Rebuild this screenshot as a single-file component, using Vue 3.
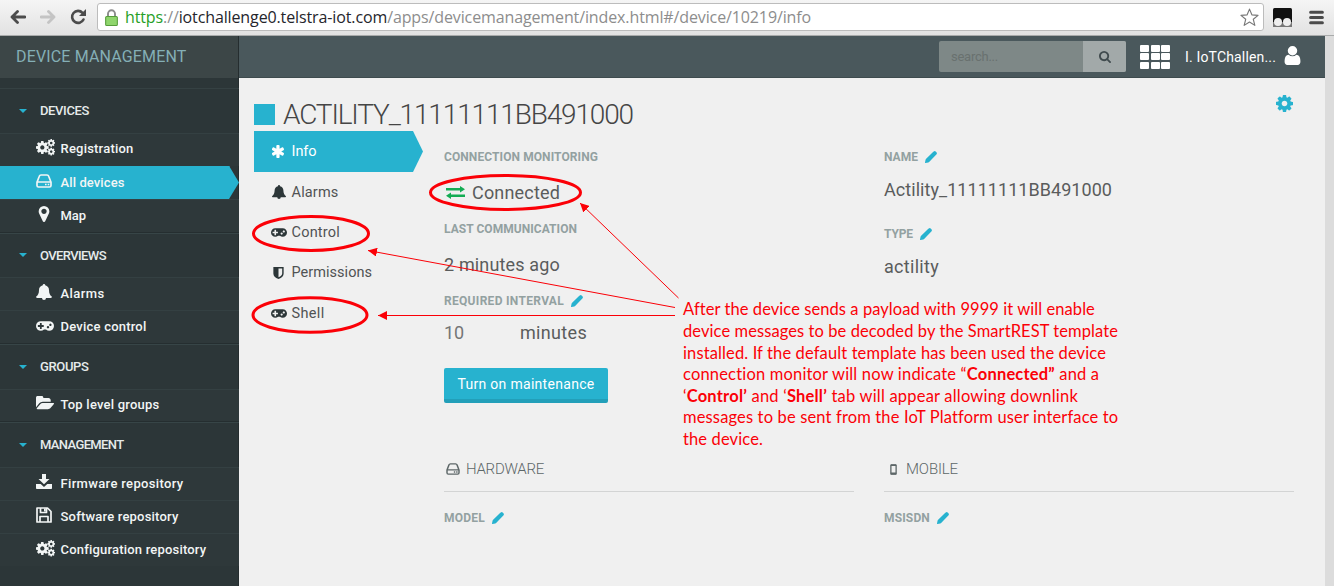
<script setup>
import { h } from 'vue'

// Tracks a line of text so that it fills the given width.
const vFit = {
  mounted(el, { value }) {
    const natural = el.getBoundingClientRect().width
    el.style.letterSpacing = ((value - natural) / el.textContent.length).toFixed(3) + 'px'
  }
}

const COG = 'M1152 896q0-106-75-181t-181-75-181 75-75 181 75 181 181 75 181-75 75-181zm512-109v222q0 12-8 23t-20 13l-185 28q-19 54-39 91 35 50 107 138 10 12 10 25t-9 23q-27 37-99 108t-94 71q-12 0-26-9l-138-108q-44 23-91 38-16 136-29 186-7 28-36 28h-222q-14 0-24.5-8.5t-11.5-21.5l-28-184q-49-16-90-37l-141 107q-10 9-25 9-14 0-25-11-126-114-165-168-7-10-7-23 0-12 8-23 15-21 51-66.5t54-70.5q-27-50-41-99l-183-27q-13-2-21-12.5t-8-23.5v-222q0-12 8-23t19-13l186-28q14-46 39-92-40-57-107-138-10-12-10-24 0-10 9-23 26-36 98.5-107.5t94.5-71.5q13 0 26 10l138 107q44-23 91-38 16-136 29-186 7-28 36-28h222q14 0 24.5 8.5t11.5 21.5l28 184q49 16 90 37l142-107q9-9 24-9 13 0 25 10 129 119 165 170 7 8 7 22 0 12-8 23-15 21-51 66.5t-54 70.5q26 50 41 98l183 28q13 2 21 12.5t8 23.5z'

// name: [viewBox, [[path, transform, stroke width], ...]]
const icons = {
  cog: ['128 128 1536 1536', [[COG]]],
  cogs: ['0 0 18 16', [[COG, 'translate(-1.1 .9) scale(.0079)'], [COG, 'translate(10.1 -.6) scale(.0048)'], [COG, 'translate(10.1 7.6) scale(.0048)']]],
  asterisk: ['128 128 1536 1536', [['M1482 1050q46 26 59.5 77.5t-12.5 97.5l-64 110q-26 46-77.5 59.5t-97.5-12.5l-266-153v307q0 52-38 90t-90 38h-128q-52 0-90-38t-38-90v-307l-266 153q-46 26-97.5 12.5t-77.5-59.5l-64-110q-26-46-12.5-97.5t59.5-77.5l266-154-266-154q-46-26-59.5-77.5t12.5-97.5l64-110q26-46 77.5-59.5t97.5 12.5l266 153v-307q0-52 38-90t90-38h128q52 0 90 38t38 90v307l266-153q46-26 97.5-12.5t77.5 59.5l64 110q26 46 12.5 97.5t-59.5 77.5l-266 154z']]],
  user: ['256 128 1280 1536', [['M1536 1399q0 109-62.5 187t-150.5 78h-854q-88 0-150.5-78t-62.5-187q0-85 8.5-160.5t31.5-152 58.5-131 94-89 134.5-34.5q131 128 313 128t313-128q76 0 134.5 34.5t94 89 58.5 131 31.5 152 8.5 160.5zm-256-887q0 159-112.5 271.5t-271.5 112.5-271.5-112.5-112.5-271.5 112.5-271.5 271.5-112.5 271.5 112.5 112.5 271.5z']]],
  marker: ['128 128 1536 1536', [['M1152 640q0-106-75-181t-181-75-181 75-75 181 75 181 181 75 181-75 75-181zm256 0q0 109-33 179l-364 774q-16 33-47.5 52t-67.5 19-67.5-19-46.5-52l-365-774q-33-70-33-179 0-212 150-362t362-150 362 150 150 362z']]],
  search: ['64 128 1664 1664', [['M1216 832q0-185-131.5-316.5t-316.5-131.5-316.5 131.5-131.5 316.5 131.5 316.5 316.5 131.5 316.5-131.5 131.5-316.5zm512 832q0 52-38 90t-90 38q-54 0-90-38l-343-342q-179 124-399 124-143 0-273.5-55.5t-225-150-150-225-55.5-273.5 55.5-273.5 150-225 225-150 273.5-55.5 273.5 55.5 225 150 150 225 55.5 273.5q0 220-124 399l343 343q37 37 37 90z']]],
  folder: ['0 256 1880 1280', [['M1879 952q0 31-31 66l-336 396q-43 51-120.5 86.5t-143.5 35.5h-1088q-34 0-60.5-13t-26.5-43q0-31 31-66l336-396q43-51 120.5-86.5t143.5-35.5h1088q34 0 60.5 13t26.5 43zm-343-344v160h-832q-94 0-197 47.5t-164 119.5l-337 396-5 6q0-4-.5-12.5t-.5-12.5v-960q0-92 66-158t158-66h320q92 0 158 66t66 158v32h544q92 0 158 66t66 158z']]],
  gamepad: ['0 512 1920 1024', [['M832 1088v-128q0-14-9-23t-23-9h-192v-192q0-14-9-23t-23-9h-128q-14 0-23 9t-9 23v192h-192q-14 0-23 9t-9 23v128q0 14 9 23t23 9h192v192q0 14 9 23t23 9h128q14 0 23-9t9-23v-192h192q14 0 23-9t9-23zm576 64q0-53-37.5-90.5t-90.5-37.5-90.5 37.5-37.5 90.5 37.5 90.5 90.5 37.5 90.5-37.5 37.5-90.5zm256-256q0-53-37.5-90.5t-90.5-37.5-90.5 37.5-37.5 90.5 37.5 90.5 90.5 37.5 90.5-37.5 37.5-90.5zm256 128q0 212-150 362t-362 150q-192 0-338-128h-220q-146 128-338 128-212 0-362-150t-150-362 150-362 362-150h896q212 0 362 150t150 362z']]],
  bell: ['0 0 16 16', [['M8 0a1.2 1.2 0 0 1 1.2 1.3C11.600 1.800 13 3.800 13 6c0 3.600 1.200 5.400 3 6.800 0 .7-.5 1.200-1.200 1.200H10a2 2 0 0 1-4 0H1.200C.5 14 0 13.500 0 12.800 1.800 11.400 3 9.600 3 6c0-2.200 1.400-4.200 3.800-4.700A1.200 1.200 0 0 1 8 0z']]],
  disk: ['0 0 16 14', [['M1 8.200 3.300 2.200Q3.700 1 5 1H11Q12.300 1 12.700 2.200L15 8.200V11.500Q15 13 13.500 13H2.500Q1 13 1 11.500ZM1 8H15', '', 1.7], ['M9 9.700h1.600v1.600H9zM11.700 9.700h1.600v1.600h-1.600z']]],
  download: ['0 0 16 15', [['M6 0h4v5h3.500L8 10.300 2.500 5H6zM0 10h4.700L8 13l3.300-3H16v4.200q0 .8-.8.8H.8Q0 15 0 14.200z']]],
  floppy: ['0 0 16 16', [['M1 1H11.500L15 4.500V15H1ZM4 15V9.500H12V15M4.500 1V5.500H10.500V1', '', 1.7], ['M8 1.500h1.800v3H8z']]],
  shield: ['0 0 12 14', [['M0 0h12v7.500Q12 11.600 6 14 0 11.600 0 7.500zM6 1.800V11.900Q10.300 9.900 10.300 7.500V1.800z']]],
  exchange: ['0 0 19 13', [['M0 1.900h14V0l5 3.200-5 3.200V4.500H0zM19 8.500H5V6.600L0 9.800 5 13v-1.900h14z']]],
  pencil: ['0 0 12 12', [['M8.300.8 8.800.4q1-.7 1.900.2l.7.7q.9.9.2 1.900l-.5.6-7 7.300q-.3.300-.8.400L.5 12Q0 12 0 11.500L.5 8.900q.1-.4.4-.8z']]],
  mobile: ['0 0 8 12', [['M1 1H7V11H1Z', '', 1.500], ['M1 0h6v2H1zM1 9.500h6V12H1z']]],
  back: ['0 0 16 14', [['M15 7H2M7.500 1.500 2 7l5.500 5.500', '', 2.800]]],
  forward: ['0 0 16 14', [['M1 7H14M8.500 1.500 14 7l-5.500 5.500', '', 2.800]]],
  reload: ['0 0 16 16', [['M13 10.500A6 6 0 1 1 12 3.800', '', 2.600], ['M15.500 0v7H8.500z']]],
  star: ['0 0 20 20', [['M10 1.200 12.500 7.200 19 7.700 14 11.900 15.600 18.300 10 14.800 4.400 18.300 6 11.900 1 7.700 7.500 7.200Z', '', 1.200]]],
  menu: ['0 0 14 14', [['M1.500 2h11M1.500 7h11M1.500 12h11', '', 2.800]]]
}

const Icon = (props) => {
  const [viewBox, shapes] = icons[props.name]
  return h('svg', { class: 'icon', viewBox }, shapes.map(([d, transform, stroke]) => h('path', {
    d,
    transform: transform || undefined,
    fill: stroke ? 'none' : 'currentColor',
    'fill-rule': 'evenodd',
    stroke: stroke ? 'currentColor' : 'none',
    'stroke-width': stroke,
    'stroke-linecap': 'round',
    'stroke-linejoin': 'round'
  })))
}
Icon.props = ['name']

const menu = [
  { title: 'DEVICES', w: 49, items: [
    { icon: 'cogs', text: 'Registration', w: 73 },
    { icon: 'disk', text: 'All devices', w: 64, active: true },
    { icon: 'marker', text: 'Map', w: 25.5 }
  ] },
  { title: 'OVERVIEWS', w: 66, items: [
    { icon: 'bell', text: 'Alarms', w: 44 },
    { icon: 'gamepad', text: 'Device control', w: 86 }
  ] },
  { title: 'GROUPS', w: 48.5, items: [
    { icon: 'folder', text: 'Top level groups', w: 99 }
  ] },
  { title: 'MANAGEMENT', w: 83.5, items: [
    { icon: 'download', text: 'Firmware repository', w: 123 },
    { icon: 'floppy', text: 'Software repository', w: 118 },
    { icon: 'cogs', text: 'Configuration repository', w: 145.5 }
  ] }
]

const tabs = [
  { icon: 'asterisk', text: 'Info', w: 25, active: true },
  { icon: 'bell', text: 'Alarms', w: 47 },
  { icon: 'gamepad', text: 'Control', w: 48.5 },
  { icon: 'shield', text: 'Permissions', w: 80.5 },
  { icon: 'gamepad', text: 'Shell', w: 33 }
]

const note = [
  { w: 411.5, parts: [['After the device sends a payload with 9999 it will enable']] },
  { w: 435, parts: [['device messages to be decoded by the SmartREST template']] },
  { w: 423, parts: [['installed. If the default template has been used the device']] },
  { w: 416.5, parts: [['connection monitor will now indicate “'], ['Connected”', true], [' and a']] },
  { w: 395, parts: [['‘'], ['Control’', true], [' and ‘'], ['Shell’', true], [' tab will appear allowing downlink']] },
  { w: 435, parts: [['messages to be sent from the IoT Platform user interface to']] },
  { w: 80, parts: [['the device.']] }
]
</script>

<template>
  <div class="window">
    <div class="browser">
      <Icon name="back" class="nav" />
      <Icon name="forward" class="nav dim" />
      <Icon name="reload" class="nav reload" />
      <div class="address">
        <svg class="lock" viewBox="0 0 12 16"><path d="M2.700 8V4.500a3.300 3.300 0 0 1 6.600 0V8" fill="none" stroke="#8c8c8c" stroke-width="1.800" /><rect x=".5" y="7" width="11" height="8.500" rx="1" fill="#8fd56c" stroke="#569c3b" /></svg>
        <span v-fit="686" class="url"><span class="secure">https</span><span>://</span><span class="host">iotchallenge0.telstra-iot.com</span><span>/apps/devicemanagement/index.html#/device/10219/info</span></span>
        <Icon name="star" class="star" />
      </div>
      <svg class="extension" viewBox="0 0 19 19"><rect width="19" height="19" rx="1.500" fill="#111" /><path d="M0 14h19v5H0z" fill="#777" /><circle cx="5" cy="14" r="4" fill="#eee" /><circle cx="14" cy="14" r="4" fill="#eee" /></svg>
      <Icon name="menu" class="hamburger" />
    </div>

    <div class="app">
      <aside class="sidebar">
        <div class="brand"><span v-fit="170.5">DEVICE MANAGEMENT</span></div>
        <nav class="menu">
          <section v-for="group in menu" :key="group.title" class="group">
            <div class="group-title"><i class="caret"></i><span v-fit="group.w">{{ group.title }}</span></div>
            <div v-for="item in group.items" :key="item.text" class="item" :class="{ active: item.active }">
              <span class="slot"><Icon :name="item.icon" :class="item.icon" /></span><span v-fit="item.w">{{ item.text }}</span>
            </div>
          </section>
        </nav>
      </aside>

      <div class="page">
        <header class="topbar">
          <div class="search"><span v-fit="47" class="placeholder">search...</span><span class="go"><Icon name="search" /></span></div>
          <div class="grid-icon"><i v-for="n in 9" :key="n"></i></div>
          <span v-fit="91" class="username">I. IoTChallen...</span>
          <Icon name="user" class="avatar" />
        </header>

        <main class="content">
          <Icon name="cog" class="settings" />
          <h1 class="title"><i class="square"></i><span v-fit="350">ACTILITY_11111111BB491000</span></h1>
          <div class="body">
            <nav class="tabs">
              <div v-for="tab in tabs" :key="tab.text" class="tab" :class="{ active: tab.active }">
                <span class="tab-slot"><Icon :name="tab.icon" :class="tab.icon" /></span><span v-fit="tab.w">{{ tab.text }}</span>
              </div>
            </nav>

            <div class="column">
              <div class="fields">
                <div class="field"><div class="label"><span v-fit="154">CONNECTION MONITORING</span></div><div class="value"><Icon name="exchange" class="exchange" /><span v-fit="88">Connected</span></div></div>
                <div class="field"><div class="label"><span v-fit="133">LAST COMMUNICATION</span></div><div class="value"><span v-fit="116">2 minutes ago</span></div></div>
                <div class="field interval"><div class="label"><span v-fit="120">REQUIRED INTERVAL</span><Icon name="pencil" class="pencil" /></div><div class="value"><span v-fit="20" class="amount">10</span><span v-fit="67">minutes</span></div></div>
                <button class="button"><span v-fit="137">Turn on maintenance</span></button>
              </div>
              <h2 class="heading"><Icon name="disk" class="hardware" /><span v-fit="78">HARDWARE</span></h2>
              <div class="label detail"><span v-fit="41">MODEL</span><Icon name="pencil" class="pencil" /></div>
            </div>

            <div class="column second">
              <div class="fields">
                <div class="field"><div class="label"><span v-fit="34">NAME</span><Icon name="pencil" class="pencil" /></div><div class="value"><span v-fit="228">Actility_11111111BB491000</span></div></div>
                <div class="field"><div class="label"><span v-fit="29">TYPE</span><Icon name="pencil" class="pencil" /></div><div class="value"><span v-fit="55">actility</span></div></div>
              </div>
              <h2 class="heading mobile-heading"><Icon name="mobile" class="mobile" /><span v-fit="52">MOBILE</span></h2>
              <div class="label detail"><span v-fit="46">MSISDN</span><Icon name="pencil" class="pencil" /></div>
            </div>
          </div>
        </main>
      </div>
      <div class="scrollbar"></div>
    </div>

    <svg class="annotations" viewBox="0 0 1334 586">
      <defs><marker id="tip" viewBox="0 0 9 9" refX="9" refY="4.500" markerWidth="9" markerHeight="9" markerUnits="userSpaceOnUse" orient="auto"><path d="M0 0 9 4.500 0 9z" fill="#fb0007" /></marker></defs>
      <g fill="none" stroke="#fb0007" stroke-width="3">
        <ellipse cx="505.500" cy="192.500" rx="75" ry="17" />
        <ellipse cx="311" cy="233.500" rx="57.500" ry="17" />
        <ellipse cx="310" cy="315" rx="57" ry="17.300" />
      </g>
      <g fill="none" stroke="#fb0007" stroke-width="1">
        <path d="M678.500 298 580 203" marker-end="url(#tip)" />
        <path d="M675 307.500 368 250.500" marker-end="url(#tip)" />
        <path d="M675 315.500H378" marker-end="url(#tip)" />
      </g>
    </svg>
    <div class="note">
      <div v-for="(line, i) in note" :key="i"><span v-fit="line.w"><span v-for="(part, j) in line.parts" :key="j" :class="{ strong: part[1] }">{{ part[0] }}</span></span></div>
    </div>
  </div>
</template>

<style>
body { margin: 0; overflow: hidden; }
</style>

<style scoped>
* { box-sizing: border-box; }
.window { position: relative; width: 1334px; height: 586px; overflow: hidden; display: flex; flex-direction: column; font-family: Roboto, "Liberation Sans", sans-serif; background: #f0f0f0; white-space: pre; }
.icon { display: block; flex: none; }

.browser { height: 36px; flex: none; display: flex; align-items: center; background: linear-gradient(#f5f5f5, #e2e2e2); border-bottom: 1px solid #a9abab; color: #4b4b4b; padding-left: 10px; }
.nav { width: 16px; height: 14px; margin-right: 14px; margin-top: -2px; }
.dim { color: #c4c4c4; }
.reload { width: 17px; height: 16px; margin-right: 10px; }
.address { width: 1167px; height: 28px; margin-top: -1px; border: 1px solid #bcbcbc; border-radius: 3px; background: #fff; display: flex; align-items: center; padding: 0 4px 0 7px; }
.lock { width: 13px; height: 17px; margin-right: 7px; }
.url { font-family: "Open Sans", "Noto Sans", sans-serif; font-size: 16px; line-height: 22px; color: #8d8d8d; }
.secure { color: #279f27; }
.host { color: #25252b; }
.star { width: 19px; height: 19px; margin-left: auto; color: #777; }
.extension { width: 19px; height: 19px; margin-left: 9px; }
.hamburger { width: 15px; height: 15px; margin-left: 17px; }

.app { flex: 1; min-height: 0; display: flex; }
.sidebar { width: 239px; flex: none; background: #2c3638; border-right: 1px solid #252d2f; display: flex; flex-direction: column; }
.brand { height: 42px; flex: none; background: #3c4647; color: #84afb6; padding-left: 16px; font-size: 16px; line-height: 41px; }
.menu { padding-top: 10px; margin-right: -1px; }
.group { border-top: 1px solid #354143; }
.group + .group { margin-top: 0.400px; border-top-color: #374547; box-shadow: 0 -1px #252e30; }
.group-title { height: 43.500px; display: flex; align-items: center; padding-left: 19px; color: #e6ebeb; font-size: 13px; font-weight: 500; }
.caret { border: 4px solid transparent; border-top-color: #27b2cf; border-bottom: 0; margin-right: 13px; }
.item { height: 33.250px; border-top: 1px solid #344042; background: #2e383a; display: flex; align-items: center; padding: 0 0 1.500px 35px; color: #f2f5f5; font-size: 13px; font-weight: 500; }
.item.active { background: #27b2cf; border-top-color: #27b2cf; clip-path: polygon(0 0, 229px 0, 100% 50%, 229px 100%, 0 100%); }
.slot { width: 25.500px; height: 19px; padding-left: 1px; }
.slot .icon { width: 16px; height: 16px; }
.slot .cogs { width: 19px; height: 17px; }
.slot .disk { height: 14px; margin-top: 1px; }
.slot .gamepad { width: 18px; height: 10px; margin-top: 4px; }
.slot .folder { width: 18px; height: 14px; margin-top: 1px; }
.slot .download { height: 15px; }

.page { flex: 1; display: flex; flex-direction: column; }
.topbar { height: 42px; flex: none; background: #4a585c; border-bottom: 1px solid #3e4b4e; display: flex; align-items: center; padding-left: 700px; color: #fff; }
.search { width: 187px; height: 31px; border-radius: 2px; background: #7e8887; display: flex; overflow: hidden; align-items: center; padding-left: 12px; font-size: 13px; }
.placeholder { color: #69716f; }
.go { width: 43px; height: 31px; margin-left: auto; background: #a2a9a9; color: #404b4e; display: grid; place-items: center; }
.go .icon { width: 12px; height: 12px; }
.grid-icon { display: grid; grid-template-columns: repeat(3, 9px); grid-auto-rows: 7px; gap: 1.500px; margin-left: 14px; width: 30px; }
.grid-icon i { background: #fff; border-radius: 1px; }
.username { margin-left: 15px; font-size: 14px; }
.avatar { width: 17px; height: 19px; margin-left: 8px; margin-top: -2px; }
.content { position: relative; flex: 1; padding: 20px 31px 0 15px; background: #f0f0f0; }
.settings { position: absolute; right: 32px; top: 17px; width: 17px; height: 17px; color: #27b2cf; }
.title { margin: 0; height: 33px; display: flex; align-items: center; font-size: 28px; font-weight: 300; color: #454545; }
.square { width: 21px; height: 21px; margin-top: -1px; background: #27b2cf; margin-right: 8px; }
.body { display: flex; }
.tabs { width: 169px; margin-right: 21px; flex: none; }
.tab { height: 40.400px; display: flex; align-items: center; padding-left: 16px; font-size: 14.500px; color: #505354; }
.tab.active { height: 41px; background: #27b2cf; color: #fff; clip-path: polygon(0 0, 159px 0, 100% 50%, 159px 100%, 0 100%); }
.tab-slot { width: 21.500px; display: grid; place-items: center; padding-right: 4px; color: #2c3638; }
.active .tab-slot { color: #fff; }
.tab-slot .icon { width: 14px; height: 14px; }
.tab-slot .gamepad { width: 16px; height: 9px; }
.tab-slot .shield { width: 11px; height: 12px; }
.tab-slot .asterisk { width: 13px; height: 13px; }
.column { width: 410px; padding-top: 16px; }
.second { margin-left: 30px; }
.fields { height: 304px; }
.field { height: 72px; }
.second .field { height: 77px; }
.label { height: 20px; display: flex; align-items: center; font-size: 12px; font-weight: 700; color: #93a1a1; }
.pencil { width: 12px; height: 12px; margin-left: 7px; color: #27b2cf; }
.value { height: 30px; margin-top: 10px; display: flex; align-items: center; font-size: 18px; color: #5a5c5c; font-weight: 400; }
.second .value { margin-top: 7px; }
.interval .value { margin-top: 6px; }
.exchange { width: 19px; height: 13px; margin: 0 7px 0 2px; color: #13ac53; }
.amount { margin-right: 56px; color: #747676; }
.button { display: block; margin: 5px 0 0; width: 164px; height: 35px; border: 0; border-bottom: 4px solid #229fb9; border-radius: 2px; background: #27b2cf; color: #fff; font: 14px Roboto, sans-serif; padding: 0; }
.heading { margin: 0; height: 41px; border-bottom: 1px solid #d3d4d4; display: flex; align-items: center; padding: 0 0 4px 2px; font-size: 15px; font-weight: 300; color: #5d6768; }
.hardware { width: 14px; height: 12px; margin-right: 6px; }
.mobile-heading { padding-left: 6px; }
.mobile { width: 7px; height: 11px; margin-right: 9px; }
.detail { margin-top: 16px; }
.scrollbar { width: 9px; background: #dcdcdc; }

.annotations { position: absolute; inset: 0; width: 1334px; height: 586px; }
.note { position: absolute; left: 683px; top: 299.400px; color: #fb0007; font: 16.500px/21.600px Lato, sans-serif; }
.strong { font-weight: 700; }
</style>
